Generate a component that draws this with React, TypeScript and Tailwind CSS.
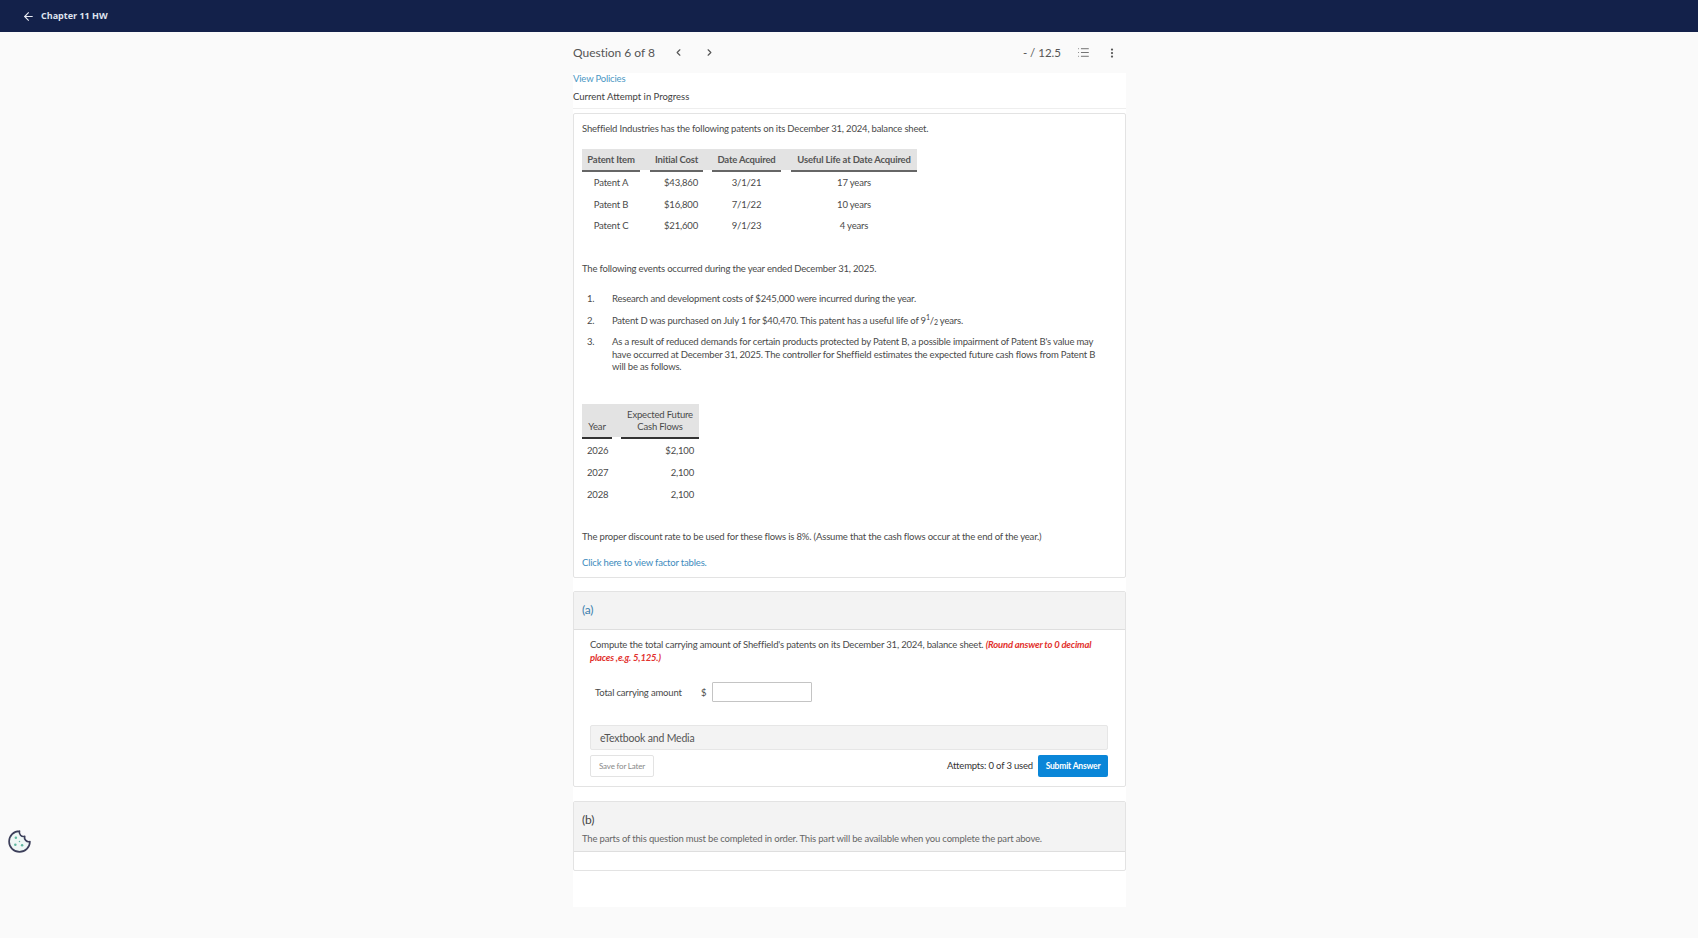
import { ArrowLeft, ChevronLeft, ChevronRight, EllipsisVertical, List } from "lucide-react";

const patents = [
  ["Patent A", "$43,860", "3/1/21", "17 years"],
  ["Patent B", "$16,800", "7/1/22", "10 years"],
  ["Patent C", "$21,600", "9/1/23", "4 years"],
];

const flows = [
  ["2026", "$2,100"],
  ["2027", "2,100"],
  ["2028", "2,100"],
];

export default function App() {
  return (
    <main className="h-[938px] overflow-hidden bg-[#fafafa] font-['Lato',sans-serif] text-[#4a4a4a] relative">
      <header className="h-8 bg-[#13214a] flex items-center pl-[22px] gap-[6px] text-white">
        <ArrowLeft size={13} strokeWidth={2} className="text-[#e8eaf2]" />
        <span className="font-['Open_Sans',sans-serif] text-[9px] font-bold text-[#dfe3ee]">Chapter 11 HW</span>
      </header>

      <div className="w-[553px] ml-[573px]">
        <div className="h-[41px] flex items-center justify-between text-[#555]">
          <div className="flex items-center">
            <span className="text-[12px] tracking-[-0.02px] w-[100px]">Question 6 of 8</span>
            <ChevronLeft size={11} strokeWidth={2.5} />
            <ChevronRight size={11} strokeWidth={2.5} className="ml-[20px]" />
          </div>
          <div className="flex items-center mr-[8px]">
            <span className="text-[11.5px] mr-[16px]">- / 12.5</span>
            <List size={13} strokeWidth={1.5} className="mr-[16px]" />
            <EllipsisVertical size={12} strokeWidth={2.5} />
          </div>
        </div>

        <div className="bg-white h-[834px] text-[9.5px] tracking-[-0.18px] leading-[12.5px]">
          <div className="h-[36px] border-b border-[#eeeeee]">
            <div className="h-[12px]">
              <a className="text-[#4b97c4]">View Policies</a>
            </div>
            <p className="mt-[6px] tracking-[0px] text-[#3e3e3e]">Current Attempt in Progress</p>
          </div>

          <section className="mt-[4px] h-[465px] border border-[#e3e3e3] rounded-[2px] pl-[8px] pt-[9px]">
            <p>Sheffield Industries has the following patents on its December 31, 2024, balance sheet.</p>

            <table className="mt-[13px] border-separate border-spacing-0">
              <thead>
                <tr className="text-center">
                  <th className="w-[58px] h-[23px] pt-[2px] bg-[#e3e3e3] border-b-2 border-[#666] font-bold text-[#555]">Patent Item</th>
                  <th className="w-[10px] bg-[#e3e3e3] border-b-2 border-white"></th>
                  <th className="w-[53px] pt-[2px] bg-[#e3e3e3] border-b-2 border-[#666] font-bold text-[#555]">Initial Cost</th>
                  <th className="w-[9px] bg-[#e3e3e3] border-b-2 border-white"></th>
                  <th className="w-[69px] pt-[2px] bg-[#e3e3e3] border-b-2 border-[#666] font-bold text-[#555]">Date Acquired</th>
                  <th className="w-[10px] bg-[#e3e3e3] border-b-2 border-white"></th>
                  <th className="w-[126px] pt-[2px] bg-[#e3e3e3] border-b-2 border-[#666] font-bold text-[#555]">Useful Life at Date Acquired</th>
                </tr>
              </thead>
              <tbody>
                {patents.map((p) => (
                  <tr key={p[0]} className="h-[21.7px]">
                    <td className="pt-[2px] text-center">{p[0]}</td>
                    <td></td>
                    <td className="pt-[2px] text-right pr-[5px]">{p[1]}</td>
                    <td></td>
                    <td className="pt-[2px] text-center">{p[2]}</td>
                    <td></td>
                    <td className="pt-[2px] text-center">{p[3]}</td>
                  </tr>
                ))}
              </tbody>
            </table>

            <p className="mt-[26px]">The following events occurred during the year ended December 31, 2025.</p>

            <ol className="mt-[18px] flex flex-col gap-[9px]">
              <li className="flex">
                <span className="w-[30px] pl-[5px]">1.</span>
                <span>Research and development costs of $245,000 were incurred during the year.</span>
              </li>
              <li className="flex">
                <span className="w-[30px] pl-[5px]">2.</span>
                <span>
                  Patent D was purchased on July 1 for $40,470. This patent has a useful life of 9<sup className="text-[7px]">1</sup>/<sub className="text-[7px]">2</sub> years.
                </span>
              </li>
              <li className="flex">
                <span className="w-[30px] shrink-0 pl-[5px]">3.</span>
                <span className="w-[490px]">
                  As a result of reduced demands for certain products protected by Patent B, a possible impairment of Patent B's value may have occurred at December 31, 2025. The controller for Sheffield estimates the expected future cash flows from Patent B will be as follows.
                </span>
              </li>
            </ol>

            <table className="mt-[30px] border-separate border-spacing-0">
              <thead>
                <tr>
                  <th className="w-[30px] h-[35px] bg-[#e3e3e3] border-b-2 border-[#333] font-normal align-bottom pb-[3px]">Year</th>
                  <th className="w-[9px] bg-[#e3e3e3] border-b-2 border-white"></th>
                  <th className="w-[78px] bg-[#e3e3e3] border-b-2 border-[#333] font-normal align-bottom pb-[3px]">Expected Future<br />Cash Flows</th>
                </tr>
              </thead>
              <tbody>
                {flows.map((f) => (
                  <tr key={f[0]} className="h-[21.7px]">
                    <td className="pt-[4px] pl-[5px]">{f[0]}</td>
                    <td></td>
                    <td className="pt-[4px] text-right pr-[5px]">{f[1]}</td>
                  </tr>
                ))}
              </tbody>
            </table>

            <p className="mt-[27.5px]">The proper discount rate to be used for these flows is 8%. (Assume that the cash flows occur at the end of the year.)</p>
            <a className="block mt-[13px] text-[#3d8bbd]">Click here to view factor tables.</a>
          </section>

          <section className="mt-[13px] h-[196px] border border-[#e3e3e3] rounded-[2px]">
            <div className="h-[38px] bg-[#f3f3f3] border-b border-[#dedede] flex items-center pl-[8px] text-[12px] text-[#3d7fae]">(a)</div>
            <div className="pl-[16px] pr-[17px]">
              <p className="mt-[9px]">
                Compute the total carrying amount of Sheffield's patents on its December 31, 2024, balance sheet.{" "}
                <em className="font-bold text-[#e2312d]">(Round answer to 0 decimal places ,e.g. 5,125.)</em>
              </p>
              <div className="mt-[18px] flex items-center pl-[5px]">
                <span className="w-[106px] pt-[2px]">Total carrying amount</span>
                <span className="w-[11px] pt-[2px]">$</span>
                <input className="w-[100px] h-[20px] bg-white border border-[#c4c4c4] rounded-[1px]" />
              </div>
              <div className="mt-[23px] h-[25px] pt-[2px] bg-[#f3f3f3] border border-[#e6e6e6] rounded-[2px] flex items-center pl-[9px] text-[10.5px] text-[#555]">eTextbook and Media</div>
              <div className="mt-[5px] flex items-center">
                <button className="w-[64px] h-[22px] bg-white border border-[#e3e3e3] rounded-[2px] text-[8px] text-[#888]">Save for Later</button>
                <span className="ml-auto text-[#333]">Attempts: 0 of 3 used</span>
                <button className="ml-[5px] w-[70px] h-[22px] bg-[#0a86d8] rounded-[2px] text-[8.5px] tracking-[-0.2px] font-bold text-white">Submit Answer</button>
              </div>
            </div>
          </section>

          <section className="mt-[14px] h-[70px] border border-[#e3e3e3] rounded-[2px]">
            <div className="h-[50px] bg-[#f3f3f3] border-b border-[#dedede] pl-[8px] pt-[10px]">
              <p className="text-[12px] leading-[16px] text-[#444]">(b)</p>
              <p className="mt-[5px] text-[#666]">The parts of this question must be completed in order. This part will be available when you complete the part above.</p>
            </div>
          </section>
        </div>
      </div>

      {/* cookie settings button */}
      <svg className="absolute left-[7px] top-[829px]" width="25" height="25" viewBox="0 0 24 24" fill="#eef7f5" stroke="#3c3f5a" strokeWidth="1.6" strokeLinecap="round" strokeLinejoin="round">
        <path d="M12 2a10 10 0 1 0 10 10 4 4 0 0 1-5-5 4 4 0 0 1-5-5" />
        <circle cx="8.5" cy="8.5" r="1.2" fill="#5fb8a0" stroke="none" />
        <circle cx="8" cy="15" r="1.2" fill="#5fb8a0" stroke="none" />
        <circle cx="14.5" cy="15.5" r="1.2" fill="#5fb8a0" stroke="none" />
        <circle cx="12" cy="12" r="0.7" fill="#5fb8a0" stroke="none" />
      </svg>
    </main>
  );
}
